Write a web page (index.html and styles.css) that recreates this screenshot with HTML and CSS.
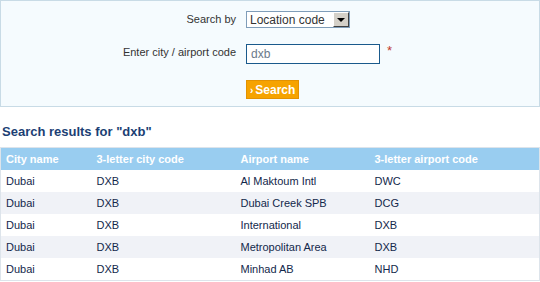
FILE: index.html
```html
<!DOCTYPE html>
<html lang="en">
<head>
    <meta charset="UTF-8">
    <meta name="viewport" content="width=device-width, initial-scale=1.0">
    <title>Location code search</title>
    <link rel="stylesheet" href="styles.css">
</head>
<body>
    <div class="search-panel">
        <form class="search-form">
            <label for="searchBy">Search by</label>
            <div class="select-box">
                <select id="searchBy" name="searchBy">
                    <option>Location code</option>
                    <option>City name</option>
                </select>
                <span class="select-arrow"></span>
            </div>

            <label for="code">Enter city / airport code</label>
            <div class="field-row">
                <input type="text" id="code" name="code" value="dxb">
                <span class="required">*</span>
            </div>

            <span></span>
            <div>
                <button type="submit"><span class="chevron">&rsaquo;</span>Search</button>
            </div>
        </form>
    </div>

    <h2 class="results-title">Search results for "dxb"</h2>

    <table class="results">
        <colgroup>
            <col class="col-city">
            <col class="col-citycode">
            <col class="col-airport">
            <col>
        </colgroup>
        <thead>
            <tr>
                <th>City name</th>
                <th>3-letter city code</th>
                <th>Airport name</th>
                <th>3-letter airport code</th>
            </tr>
        </thead>
        <tbody>
            <tr><td>Dubai</td><td>DXB</td><td>Al Maktoum Intl</td><td>DWC</td></tr>
            <tr><td>Dubai</td><td>DXB</td><td>Dubai Creek SPB</td><td>DCG</td></tr>
            <tr><td>Dubai</td><td>DXB</td><td>International</td><td>DXB</td></tr>
            <tr><td>Dubai</td><td>DXB</td><td>Metropolitan Area</td><td>DXB</td></tr>
            <tr><td>Dubai</td><td>DXB</td><td>Minhad AB</td><td>NHD</td></tr>
        </tbody>
    </table>
</body>
</html>
```

FILE: styles.css
```css
body {
    font-family: "Liberation Sans", Arial, sans-serif;
    font-size: 11px;
    margin: 0;
    padding: 0;
    background-color: #fff;
    color: #13284b;
}

.search-panel {
    background-color: #f5fbfe;
    border: 1px solid #c8dbe6;
    height: 107px;
    box-sizing: border-box;
    padding-top: 10px;
}

.search-form {
    display: grid;
    grid-template-columns: 235px auto;
    column-gap: 10px;
    row-gap: 16px;
}

.search-form label {
    text-align: right;
    color: #333;
    line-height: 13px;
    padding-top: 2px;
}

.select-box {
    position: relative;
    width: 104px;
    height: 17px;
}

.select-box select {
    appearance: none;
    -webkit-appearance: none;
    width: 104px;
    height: 17px;
    margin: 0;
    padding: 0 0 0 3px;
    border: 1px solid #7f9db9;
    border-radius: 0;
    background-color: #fff;
    font-family: "Liberation Sans", Arial, sans-serif;
    font-size: 12px;
    color: #333;
}

.select-arrow {
    position: absolute;
    top: 1px;
    right: 1px;
    width: 16px;
    height: 15px;
    box-sizing: border-box;
    background-color: #d4d0c8;
    border-top: 1px solid #fff;
    border-left: 1px solid #fff;
    border-right: 1px solid #404040;
    border-bottom: 1px solid #404040;
}

.select-arrow::after {
    content: "";
    position: absolute;
    left: 3px;
    top: 5px;
    border-left: 4px solid transparent;
    border-right: 4px solid transparent;
    border-top: 4px solid #000;
}

.field-row {
    display: flex;
    align-items: flex-start;
    gap: 7px;
}

.field-row input {
    width: 134px;
    height: 20px;
    box-sizing: border-box;
    margin: 0;
    padding: 0 0 0 4px;
    border: 1px solid #1a5a8c;
    background-color: #fff;
    font-family: "Liberation Sans", Arial, sans-serif;
    font-size: 12px;
    color: #6b7a8a;
}

.required {
    color: #c0392b;
    font-size: 13px;
    line-height: 10px;
    padding-top: 2px;
}

button {
    height: 19px;
    padding: 0 3px;
    background-color: #f6a300;
    border: 1px solid #e39200;
    color: #fff;
    font-family: "Liberation Sans", Arial, sans-serif;
    font-size: 12px;
    font-weight: bold;
    cursor: pointer;
}

.chevron {
    font-size: 10px;
    margin-right: 2px;
}

.results-title {
    margin: 17px 0 0 2px;
    font-size: 13px;
    line-height: 16px;
    color: #1c3f74;
}

.results {
    width: 540px;
    margin-top: 7px;
    border-collapse: collapse;
    table-layout: fixed;
    border: 1px solid #dde4eb;
}

.col-city {
    width: 91px;
}

.col-citycode {
    width: 144px;
}

.col-airport {
    width: 134px;
}

.results th,
.results td {
    height: 22px;
    padding: 0 5px;
    text-align: left;
    white-space: nowrap;
}

.results th {
    background-color: #99cdf0;
    color: #fff;
    font-weight: bold;
}

.results tbody tr:nth-child(even) {
    background-color: #f0f2f7;
}
```
